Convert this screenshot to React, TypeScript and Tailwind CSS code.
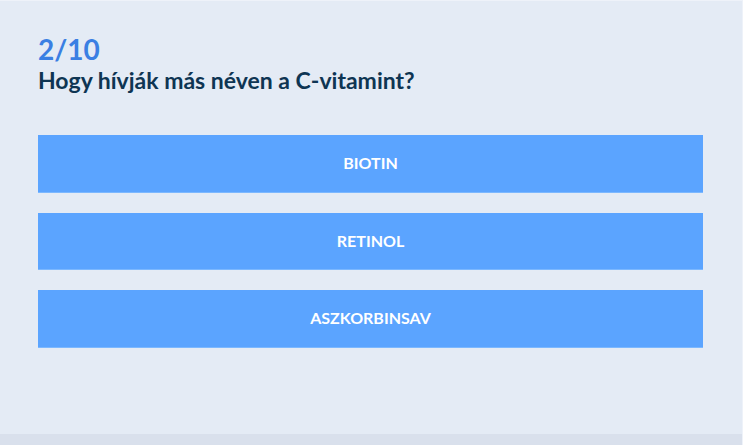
const answers = ["BIOTIN", "RETINOL", "ASZKORBINSAV"];

const App = () => {
  return (
    <div
      className="w-[743px] h-[445px] flex flex-col bg-[#e4ebf5] border-t border-r border-[#eef2f9]"
      style={{ fontFamily: "Lato, 'Open Sans', sans-serif" }}
    >
      <div className="flex-1 pl-[38px] pr-[39px] pt-[31px]">
        <div className="text-[28px] leading-[34px] font-bold text-[#3a7fe3]">2/10</div>
        <h1 className="text-[23px] leading-[28px] font-bold text-[#0e3553]">
          Hogy hívják más néven a C-vitamint?
        </h1>
        <div className="mt-[41px] flex flex-col gap-[20px]">
          {answers.map((a) => (
            <button
              key={a}
              className="h-[57.5px] w-full bg-[#5ba4ff] border-b border-[#7cb8ff] text-white text-[16px] font-bold"
            >
              {a}
            </button>
          ))}
        </div>
      </div>
      <div className="h-[11px] bg-[#d9e0ec]" />
    </div>
  );
};

export default App;
